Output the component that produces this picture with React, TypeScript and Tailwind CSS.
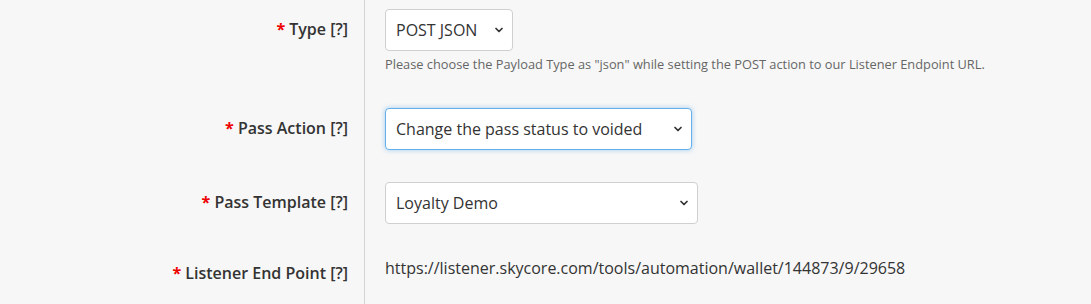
import { ChevronDown } from "lucide-react";

const font = { fontFamily: '"Open Sans", "Liberation Sans", sans-serif' };

const Label = ({ text }: { text: string }) => (
  <span className="text-[16px] font-semibold text-[#333]">
    <span className="text-[#e00] font-bold">*</span> {text} [?]
  </span>
);

const Select = ({
  value,
  width,
  focused,
}: {
  value: string;
  width: string;
  focused?: boolean;
}) => (
  <div
    className={
      "relative h-[42px] bg-white rounded-[4px] border flex items-center pl-[10px] pr-8 " +
      width +
      (focused
        ? " border-[#66afe9] shadow-[0_0_5px_rgba(102,175,233,0.6)]"
        : " border-[#d0d0d0]")
    }
  >
    <span className="text-[16px] text-[#333] whitespace-nowrap">{value}</span>
    <ChevronDown
      className="absolute right-[7px] top-1/2 -translate-y-1/2 w-[12px] h-[12px] text-[#333]"
      strokeWidth={3.5}
    />
  </div>
);

export default function App() {
  return (
    <div className="w-[1091px] h-[304px] bg-[#f7f7f7] overflow-hidden" style={font}>
      {/* Type */}
      <div className="flex h-[99px]">
        <div className="w-[365px] border-r border-[#d4d4d4] pr-4 pt-[9px]">
          <div className="h-[42px] flex items-center justify-end pb-[3px]">
            <Label text="Type" />
          </div>
        </div>
        <div className="pl-5 pt-[9px]">
          <Select value="POST JSON" width="w-[128px]" />
          <p className="mt-[4px] text-[12.8px] leading-[18px] text-[#666] whitespace-nowrap">
            Please choose the Payload Type as "json" while setting the POST action to our Listener
            Endpoint URL.
          </p>
        </div>
      </div>

      {/* Pass Action */}
      <div className="flex h-[74px]">
        <div className="w-[365px] border-r border-[#d4d4d4] pr-4 pt-[9px]">
          <div className="h-[42px] flex items-center justify-end pb-[3px]">
            <Label text="Pass Action" />
          </div>
        </div>
        <div className="pl-5 pt-[9px]">
          <Select value="Change the pass status to voided" width="w-[307px]" focused />
        </div>
      </div>

      {/* Pass Template */}
      <div className="flex h-[74px]">
        <div className="w-[365px] border-r border-[#d4d4d4] pr-4 pt-[9px]">
          <div className="h-[42px] flex items-center justify-end pb-[3px]">
            <Label text="Pass Template" />
          </div>
        </div>
        <div className="pl-5 pt-[9px]">
          <Select value="Loyalty Demo" width="w-[313px]" />
        </div>
      </div>

      {/* Listener End Point */}
      <div className="flex h-[80px]">
        <div className="w-[365px] border-r border-[#d4d4d4] pr-4 pt-[14px]">
          <div className="h-[24px] flex items-center justify-end">
            <Label text="Listener End Point" />
          </div>
        </div>
        <div className="pl-5 pt-[9px]">
          <span className="text-[16px] leading-[24px] text-[#333]">
            https://listener.skycore.com/tools/automation/wallet/144873/9/29658
          </span>
        </div>
      </div>
    </div>
  );
}
